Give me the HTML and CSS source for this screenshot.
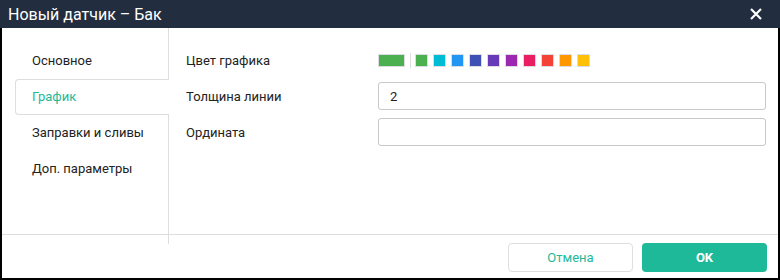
FILE: index.html
```html
<!DOCTYPE html>
<html lang="ru">
<head>
	<meta charset="UTF-8">
	<title>Новый датчик</title>
	<link rel="stylesheet" href="styles.css">
</head>
<body>
	<div class="dialog">
		<div class="titlebar">
			<span class="title">Новый датчик – Бак</span>
			<a class="close" title="Закрыть">
				<svg width="12" height="12" viewBox="0 0 12 12"><path d="M1 1L11 11M11 1L1 11" stroke="#fff" stroke-width="2.2" fill="none"/></svg>
			</a>
		</div>
		<div class="main">
			<ul class="tabs">
				<li>Основное</li>
				<li class="cur">График</li>
				<li>Заправки и сливы</li>
				<li>Доп. параметры</li>
			</ul>
			<div class="content">
				<div class="row">
					<label>Цвет графика</label>
					<div class="colors">
						<span class="swatch wide" style="background:#4caf50"></span>
						<span class="sep"></span>
						<span class="swatch" style="background:#4caf50"></span>
						<span class="swatch" style="background:#00bcd4"></span>
						<span class="swatch" style="background:#2196f3"></span>
						<span class="swatch" style="background:#3f51b5"></span>
						<span class="swatch" style="background:#673ab7"></span>
						<span class="swatch" style="background:#9c27b0"></span>
						<span class="swatch" style="background:#e91e63"></span>
						<span class="swatch" style="background:#f44336"></span>
						<span class="swatch" style="background:#ff9800"></span>
						<span class="swatch" style="background:#ffc107"></span>
					</div>
				</div>
				<div class="row">
					<label>Толщина линии</label>
					<input class="field" type="text" value="2">
				</div>
				<div class="row">
					<label>Ордината</label>
					<input class="field" type="text" value="">
				</div>
			</div>
		</div>
		<div class="footer">
			<a class="btn cancel">Отмена</a>
			<a class="btn ok">OK</a>
		</div>
	</div>
</body>
</html>
```

FILE: styles.css
```css
*{
	margin: 0;
	padding: 0;
	box-sizing: border-box;
}
body{
	font-family: Roboto, "Liberation Sans", sans-serif;
	font-size: 13px;
	color: #222;
	background: #fff;
}
.dialog{
	width: 780px;
	height: 280px;
	border: 2px solid #000;
	border-top: none;
	display: flex;
	flex-direction: column;
}
.titlebar{
	height: 28px;
	margin: 0 -2px;
	background: #222e3f;
	color: #fff;
	display: flex;
	align-items: center;
	justify-content: space-between;
	padding: 0 18px 0 8px;
}
.title{
	font-size: 16px;
}
.close{
	display: flex;
	cursor: pointer;
}
.main{
	height: 216px;
	display: flex;
}
.tabs{
	list-style: none;
	width: 167px;
	border-right: 1px solid #dedede;
	padding: 15px 0 0 13px;
}
.tabs li{
	height: 36px;
	line-height: 34px;
	padding-left: 16px;
	margin-right: -1px;
	border: 1px solid transparent;
	border-right: none;
	cursor: pointer;
}
.tabs li.cur{
	color: #1eb999;
	background: #fff;
	border-color: #dedede;
	border-radius: 4px 0 0 4px;
	position: relative;
}
.content{
	flex: 1;
	padding: 18px 12px 0 17px;
}
.row{
	height: 28px;
	margin-bottom: 8px;
	display: flex;
	align-items: center;
}
.row label{
	width: 192px;
	flex: none;
}
.colors{
	display: flex;
	align-items: center;
}
.swatch{
	width: 13px;
	height: 13px;
	margin-right: 5px;
	border: 1px solid #dcdce4;
	border-radius: 1px;
}
.swatch.wide{
	width: 27px;
	margin-right: 5px;
}
.sep{
	width: 1px;
	height: 15px;
	background: #dedede;
	margin-right: 4px;
}
.field{
	flex: 1;
	height: 28px;
	border: 1px solid #c8c8c8;
	border-radius: 3px;
	padding: 0 11px;
	font-family: inherit;
	font-size: 13px;
	color: #222;
	outline: none;
}
.footer{
	margin-top: -10px;
	border-top: 1px solid #dedede;
	flex: 1;
	display: flex;
	justify-content: flex-end;
	align-items: flex-start;
	padding: 8px 9px 0 0;
	gap: 9px;
}
.btn{
	width: 125px;
	height: 29px;
	border-radius: 4px;
	display: flex;
	align-items: center;
	justify-content: center;
	cursor: pointer;
}
.cancel{
	border: 1px solid #dedede;
	color: #1eb999;
}
.ok{
	background: #1eb999;
	color: #fff;
	font-weight: bold;
	margin-right: 2px;
}
```
